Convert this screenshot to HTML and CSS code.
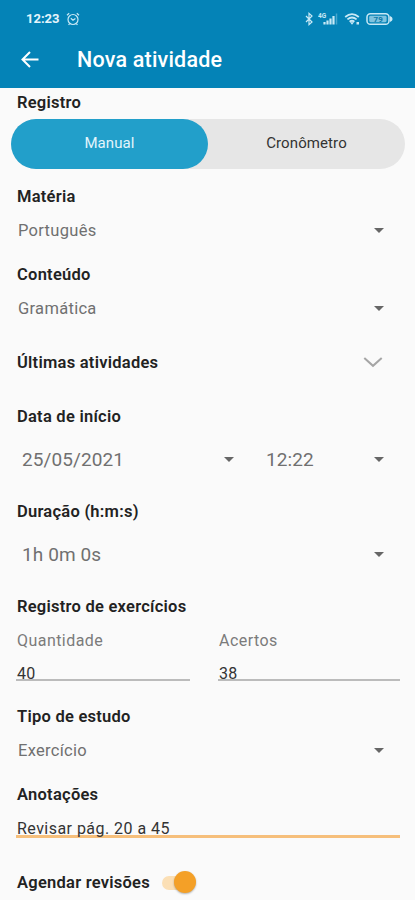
FILE: index.html
```
<!DOCTYPE html>
<html lang="pt-BR">
<head>
    <meta charset="UTF-8" />
    <meta name="viewport" content="width=device-width, initial-scale=1.0" />
    <title>Nova atividade</title>
    <link rel="stylesheet" href="styles.css">
</head>
<body>
<header class="app-bar">
    <div class="status-bar">
        <span class="clock">12:23</span>
        <svg class="alarm" width="14" height="14" viewBox="0 0 14 14">
            <circle cx="7" cy="7.5" r="5" />
            <path d="M1 3.2L3.2 1.2M13 3.2L10.8 1.2M4.8 6.2L7 8.2L9.4 6.4M3.6 11.6L2.6 13M10.4 11.6L11.4 13" />
        </svg>
        <div class="status-icons">
            <svg width="8" height="14" viewBox="0 0 8 14">
                <path d="M1 4L7 10L4 12.6V1.4L7 4L1 10" />
            </svg>
            <svg width="21" height="14" viewBox="0 0 21 14">
                <text x="0" y="5.5">4G</text>
                <path class="bars" d="M6.5 12.5V10M9.5 12.5V8.5M12.5 12.5V6.5M15.5 12.5V4" />
                <path class="bars faint" d="M18.5 12.5V1.5" />
            </svg>
            <svg width="17" height="14" viewBox="0 0 17 14">
                <path class="wifi" d="M1.2 5Q8 -0.8 14.8 5M3.4 7.4Q8 3.6 12.6 7.4M5.6 9.7Q8 7.8 10.4 9.7" />
                <path class="solid" d="M6 10.3H10L8 12.8ZM12.5 10H15V12.5H12.5Z" />
            </svg>
            <svg width="27" height="14" viewBox="0 0 27 14">
                <rect class="case" x="1" y="1.7" width="22" height="10.6" rx="3.4" />
                <rect class="charge" x="3.2" y="3.8" width="17.4" height="6.4" rx="1.4" />
                <path class="solid" d="M24 4Q26.6 5 26.6 7T24 10Z" />
                <text class="level" x="12.2" y="9.8">79</text>
            </svg>
        </div>
    </div>
    <div class="title-bar">
        <svg width="20" height="20" viewBox="0 0 20 20">
            <path d="M18.5 9.5H2.5M10 2L2.5 9.5L10 17" />
        </svg>
        <h1>Nova atividade</h1>
    </div>
</header>

<main class="form">
    <h2>Registro</h2>
    <div class="toggle">
        <span class="option active">Manual</span>
        <span class="option">Cronômetro</span>
    </div>

    <h2>Matéria</h2>
    <div class="select"><span>Português</span><i class="caret"></i></div>

    <h2>Conteúdo</h2>
    <div class="select"><span>Gramática</span><i class="caret"></i></div>

    <div class="expander">
        <h2>Últimas atividades</h2>
        <svg width="20" height="12" viewBox="0 0 20 12">
            <path d="M1.3 1L10 8.8L18.7 1" />
        </svg>
    </div>

    <h2>Data de início</h2>
    <div class="date-row">
        <div class="select large"><span>25/05/2021</span><i class="caret"></i></div>
        <div class="select large"><span>12:22</span><i class="caret"></i></div>
    </div>

    <h2 class="duration">Duração (h:m:s)</h2>
    <div class="select large"><span>1h 0m 0s</span><i class="caret"></i></div>

    <h2 class="exercises">Registro de exercícios</h2>
    <div class="counts">
        <div class="count">
            <span class="hint">Quantidade</span>
            <div class="field">40</div>
        </div>
        <div class="count">
            <span class="hint">Acertos</span>
            <div class="field">38</div>
        </div>
    </div>

    <h2>Tipo de estudo</h2>
    <div class="select"><span>Exercício</span><i class="caret"></i></div>

    <h2>Anotações</h2>
    <div class="field focused">Revisar pág. 20 a 45</div>

    <div class="review">
        <h2>Agendar revisões</h2>
        <span class="switch"><span class="thumb"></span></span>
    </div>
</main>
</body>
</html>
```
FILE: styles.css
```
* {
    box-sizing: border-box;
}
body {
    margin: 0;
    height: 900px;
    overflow: hidden;
    background-color: #fafafa;
    color: #222;
    font-family: Roboto, sans-serif;
    font-size: 16px;
}
svg {
    display: block;
    flex: none;
    fill: none;
    stroke: #fff;
}

/* Header */
.app-bar {
    height: 88px;
    background-color: #0483b7;
    color: #fff;
}
.status-bar {
    display: flex;
    align-items: center;
    height: 37px;
    padding: 0 22px 0 26px;
}
.status-bar svg {
    stroke: #c9e9f6;
    stroke-width: 1.2;
}
.clock {
    width: 34px;
    font-size: 13px;
    font-weight: 700;
    color: #e4f5fc;
}
.alarm {
    margin-left: 6px;
}
.status-icons {
    display: flex;
    margin-left: auto;
    gap: 5px;
}
.status-icons text {
    font-size: 6.5px;
    font-weight: 700;
    fill: #c9e9f6;
    stroke: none;
}
.status-icons .bars {
    stroke-width: 2.2;
}
.status-icons .faint {
    stroke-width: 1.5;
    opacity: 0.35;
}
.status-icons .wifi {
    stroke-width: 1.8;
}
.status-icons .solid {
    fill: #c9e9f6;
    stroke: none;
}
.status-icons .case {
    stroke-width: 1.5;
}
.status-icons .charge {
    fill: #7fc3df;
    stroke: none;
}
.status-icons .level {
    font-size: 8px;
    fill: #0d7aa8;
    text-anchor: middle;
}
.title-bar {
    display: flex;
    align-items: center;
    gap: 37px;
    height: 45px;
    padding-left: 20px;
}
.title-bar svg {
    stroke-width: 2;
}
h1 {
    margin: 0;
    font-size: 21.5px;
    font-weight: 500;
    letter-spacing: 0.2px;
}

/* Form */
.form {
    padding: 5px 15px 0 17px;
}
h2 {
    margin: 24px 0 0;
    height: 20px;
    font-size: 16.5px;
    font-weight: 600;
    line-height: 20px;
    letter-spacing: 0.25px;
    white-space: nowrap;
}
h2:first-child {
    margin-top: 0;
}
.toggle {
    display: flex;
    height: 50px;
    margin: 6px -5px 18px -6px;
    border-radius: 25px;
    background-color: #e6e6e6;
}
.toggle + h2 {
    margin-top: 18px;
}
.option {
    flex: 1;
    border-radius: 25px;
    font-size: 15px;
    line-height: 48px;
    text-align: center;
    letter-spacing: 0.1px;
    color: #333;
}
.option.active {
    background-color: #229fca;
    color: #e3f5fc;
}
.select {
    display: flex;
    align-items: center;
    justify-content: space-between;
    height: 20px;
    margin-top: 13px;
    margin-bottom: 25px;
    padding: 0 16px 0 1px;
    font-size: 16.5px;
    letter-spacing: 0.3px;
    color: #707070;
}
.select + h2 {
    margin-top: 0;
}
.caret {
    border: 5px solid transparent;
    border-top-color: #666;
    border-bottom: 0;
}
.select.large {
    height: 24px;
    margin-top: 20px;
    margin-bottom: 31px;
    padding-left: 5px;
    font-size: 19px;
    letter-spacing: 0.1px;
}
.expander {
    display: flex;
    align-items: center;
    justify-content: space-between;
    margin-top: 35px;
    padding-right: 17px;
}
.expander svg {
    stroke: #a5a5a5;
    stroke-width: 2;
}
.expander + h2 {
    margin-top: 34px;
}
.date-row {
    display: grid;
    grid-template-columns: 222px 1fr;
    column-gap: 22px;
}
.date-row .select:first-child {
    padding-right: 5px;
}
.date-row + h2 {
    margin-top: 0;
}
.counts {
    display: grid;
    grid-template-columns: 173px 181px;
    gap: 29px;
    margin-top: 14px;
}
.hint {
    display: block;
    line-height: 20px;
    letter-spacing: 0.45px;
    color: #7b7b7b;
}
/* The underline runs right through the foot of the text */
.field {
    height: 17px;
    margin: 13px 0 0 -1px;
    padding-left: 1px;
    border-bottom: 2px solid #bbb;
    line-height: 20px;
    letter-spacing: 0.3px;
    color: #333;
}
.counts + h2 {
    margin-top: 26px;
}
.field.focused {
    height: 19px;
    margin-top: 14px;
    border-bottom: 3px solid #f6bf7b;
    letter-spacing: 0.46px;
}
.review {
    display: flex;
    align-items: center;
    margin-top: 35px;
}
.switch {
    width: 33px;
    height: 14px;
    margin-left: 12px;
    border-radius: 7px;
    background-color: #fbdfb5;
}
.thumb {
    display: block;
    width: 22px;
    height: 22px;
    margin: -5px 0 0 12px;
    border-radius: 50%;
    background-color: #f4a027;
    box-shadow: 0 1px 2px rgba(0, 0, 0, 0.3);
}
```
